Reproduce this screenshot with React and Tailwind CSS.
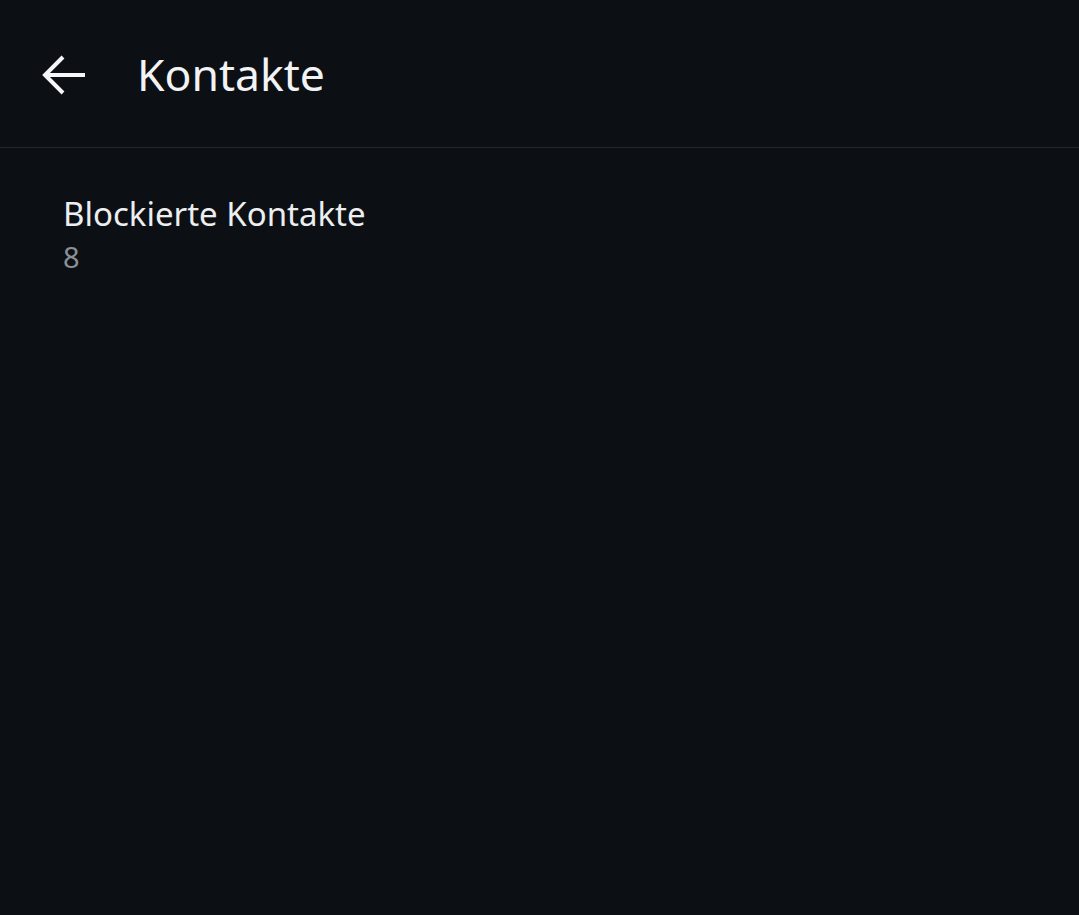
export default function App() {
  return (
    <div className="w-[1079px] h-[915px] bg-[#0c1014] text-[#f2f3f4] overflow-hidden" style={{ fontFamily: '"Noto Sans", "Open Sans", sans-serif' }}>
      <div className="h-[147px] flex items-center">
        <div className="w-[137px] flex items-center pl-[42px] pt-[2px]">
          <svg width="44" height="40" viewBox="0 0 44 40" fill="none" stroke="#f5f6f7" strokeWidth="4" strokeLinecap="butt" strokeLinejoin="miter">
            <path d="M43 20H4" />
            <path d="M21 2L3 20L21 38" />
          </svg>
        </div>
        <div className="text-[44.5px] leading-none pt-[2px]">Kontakte</div>
      </div>
      <div className="h-px bg-[#22272b]" />
      <div className="pl-[63px] pt-[48px]">
        <div className="text-[33px] leading-[36px] text-[#eceef0]">Blockierte Kontakte</div>
        <div className="text-[29px] leading-[34px] text-[#8b9096] mt-[8px]">8</div>
      </div>
    </div>
  );
}
